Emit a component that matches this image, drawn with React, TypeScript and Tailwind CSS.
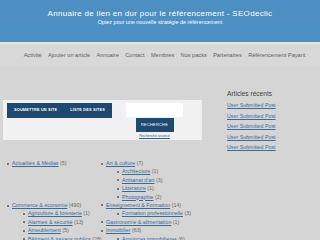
import React from "react";

type Item = { name: string; count: string; sub?: boolean };

const col1: (Item | "gap")[] = [
  { name: "Actualités & Médias", count: "(5)" },
  "gap",
  { name: "Commerce & économie", count: "(490)" },
  { name: "Agriculture & foresterie", count: "(1)", sub: true },
  { name: "Alarmes & sécurité", count: "(13)", sub: true },
  { name: "Ameublement", count: "(5)", sub: true },
  { name: "Bâtiment & travaux publics", count: "(28)", sub: true },
];

const col2: Item[] = [
  { name: "Art & culture", count: "(7)" },
  { name: "Architecture", count: "(1)", sub: true },
  { name: "Artisanat d'art", count: "(3)", sub: true },
  { name: "Littérature", count: "(1)", sub: true },
  { name: "Photographie", count: "(2)", sub: true },
  { name: "Enseignement & Formation", count: "(14)" },
  { name: "Formation professionnelle", count: "(3)", sub: true },
  { name: "Gastronomie & alimentation", count: "(1)" },
  { name: "Immobilier", count: "(63)" },
  { name: "Annonces immobilières", count: "(6)", sub: true },
];

function Row({ it }: { it: Item }) {
  return (
    <div className={`flex items-center h-[8.4px] whitespace-nowrap ${it.sub ? "pl-[16px]" : ""}`}>
      <span className="relative">
        <span className="absolute left-[-5px] top-[2.5px] w-[2px] h-[2px] rounded-full bg-[#555]" />
        <span className="text-[#3a6b9a] underline decoration-[0.5px] underline-offset-[0.5px]">{it.name}</span>
        <span className="text-[#6a6a6a]"> {it.count}</span>
      </span>
    </div>
  );
}

const nav = [
  "Activité",
  "Ajouter un article",
  "Annuaire",
  "Contact",
  "Membres",
  "Nos packs",
  "Partenaires",
  "Référencement Payant",
];

export default function App() {
  return (
    <div className="w-[320px] h-[240px] overflow-hidden bg-[#d5d5d5] font-['Liberation_Sans',Arial,sans-serif]">
      <div className="h-[42px] bg-[#4c8fc2] flex flex-col items-center pt-[9px]">
        <div className="text-white text-[8px] leading-[10px] tracking-[0.3px] whitespace-nowrap">
          Annuaire de lien en dur pour le référencement - SEOdeclic
        </div>
        <div className="text-white text-[5.4px] leading-[7px] whitespace-nowrap">
          Optez pour une nouvelle stratégie de référencement
        </div>
      </div>
      <div className="h-[2px] bg-[#e4e4e4]" />
      <div className="h-[22px] bg-[#d8d8d8] flex items-center justify-center gap-[6.4px] pl-[9px] text-[5.6px] text-[#5e5e5e] whitespace-nowrap">
        {nav.map((n) => (
          <span key={n}>{n}</span>
        ))}
      </div>
      <div className="flex">
        <div className="w-[220px] shrink-0">
          <div className="mt-[34px] ml-[3px] w-[199px] h-[40px] bg-[#f1f1f1] flex pt-[3px]">
            <div className="ml-[4px] w-[105px] h-[15px] bg-[#1e4a6f] flex items-center pl-[7px] gap-[13px] text-white text-[3.8px] font-bold tracking-[0.2px] whitespace-nowrap">
              <span>SOUMETTRE UN SITE</span>
              <span>LISTE DES SITES</span>
            </div>
            <div className="ml-[14px] flex flex-col items-center w-[57px]">
              <div className="w-[57px] h-[14px] bg-white" />
              <div className="mt-[1px] w-[38px] h-[14px] bg-[#1e4a6f] flex items-center justify-center text-white text-[4px] tracking-[0.2px]">
                RECHERCHE
              </div>
              <div className="mt-[2px] text-[3.7px] leading-[5px] text-[#2d5f8f] underline whitespace-nowrap">
                Recherche avancé
              </div>
            </div>
          </div>
          <div className="mt-[19.8px] flex text-[5.3px]">
            <div className="w-[94px] shrink-0 pl-[12px] flex flex-col">
              {col1.map((it, i) =>
                it === "gap" ? (
                  <div key={i} className="h-[33.6px]" />
                ) : (
                  <Row key={i} it={it} />
                )
              )}
            </div>
            <div className="pl-[12px] flex flex-col">
              {col2.map((it, i) => (
                <Row key={i} it={it} />
              ))}
            </div>
          </div>
        </div>
        <div className="pl-[7px] pt-[22.5px]">
          <div className="text-[6.6px] leading-[9px] text-[#444] whitespace-nowrap">Articles récents</div>
          <div className="mt-[3.25px] flex flex-col">
            {[0, 1, 2, 3, 4].map((i) => (
              <div key={i} className="h-[10.5px] flex items-center text-[5.3px] text-[#3a6b9a] underline whitespace-nowrap">
                User Submitted Post
              </div>
            ))}
          </div>
        </div>
      </div>
    </div>
  );
}
